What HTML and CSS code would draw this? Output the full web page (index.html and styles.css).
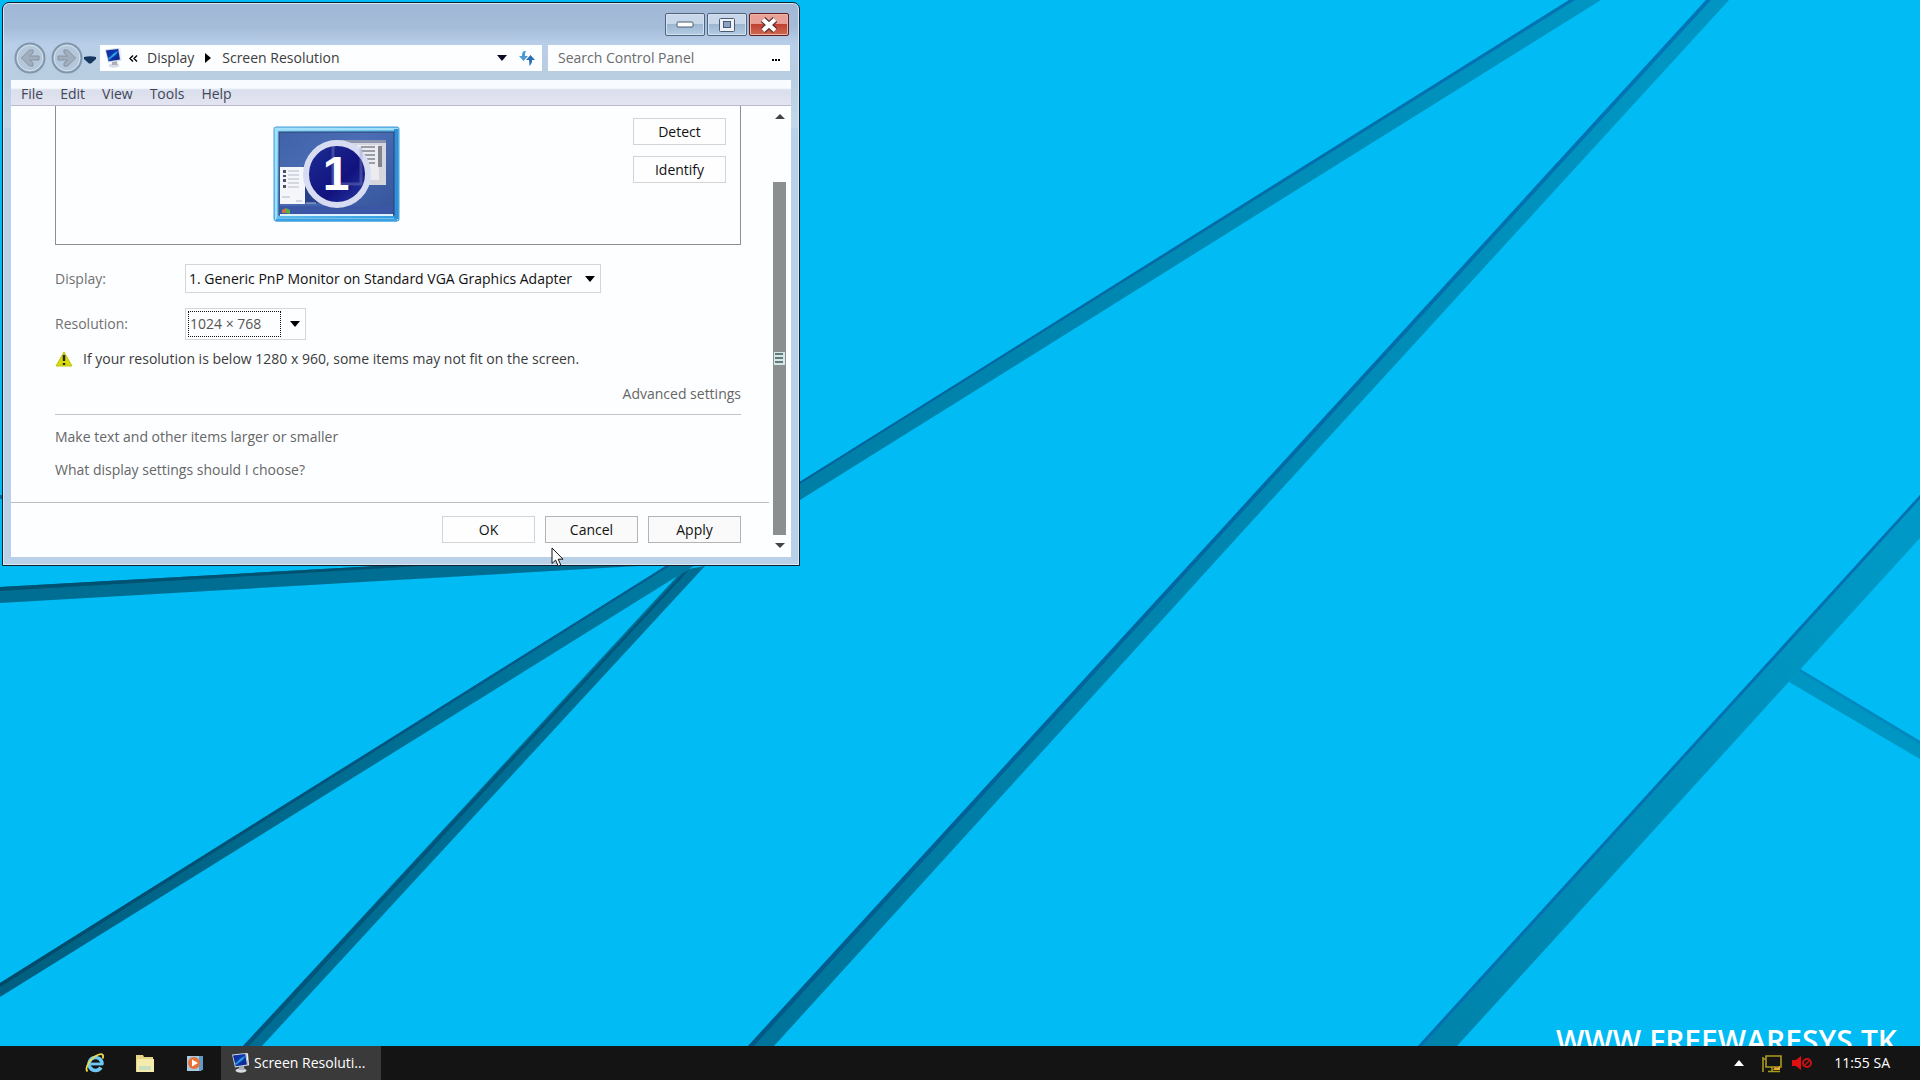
FILE: index.html
```html
<!DOCTYPE html>
<html lang="en">
<head>
<meta charset="utf-8">
<title>Screen Resolution</title>
<link rel="stylesheet" href="styles.css">
</head>
<body>
<svg class="symbols" aria-hidden="true">
  <defs>
    <linearGradient id="screen" x1="0" y1="0" x2="1" y2="1">
      <stop offset="0" stop-color="#0a2a8c"/><stop offset=".5" stop-color="#1237b8"/><stop offset="1" stop-color="#0a1d78"/>
    </linearGradient>
    <symbol id="display-icon" viewBox="0 0 18 20">
      <ellipse cx="10" cy="17.500" rx="5.500" ry="2.200" fill="#d9dce2"/>
      <path d="M8 14l5-1 .5 4H8z" fill="#aab0ba"/>
      <path d="M1 1.500L15 0l2 12.500L4 14.500z" fill="#c9d3de"/>
      <path d="M2 2.500L14.200 1l1.700 10.600L4.700 13.300z" fill="url(#screen)"/>
      <path d="M4 10c3 0 4-5 10-7-2 5-5 5-9 9z" fill="#28a6d8"/>
      <path d="M15 0l2 .6 1 11.600-1 .3z" fill="#eef2f6"/>
    </symbol>
  </defs>
</svg>

<main class="desktop">
  <svg class="wallpaper" viewBox="0 0 1920 1046" preserveAspectRatio="xMidYMid slice" aria-hidden="true">
    <defs>
      <linearGradient id="long" gradientUnits="userSpaceOnUse" x1="0" y1="990" x2="1600" y2="0">
        <stop offset="0" stop-color="#005f80"/><stop offset=".5" stop-color="#007ea6"/><stop offset="1" stop-color="#0095c2"/>
      </linearGradient>
      <linearGradient id="longEdge" gradientUnits="userSpaceOnUse" x1="0" y1="990" x2="1600" y2="0">
        <stop offset="0" stop-color="#004a69"/><stop offset=".5" stop-color="#006299"/><stop offset="1" stop-color="#0074b4"/>
      </linearGradient>
      <linearGradient id="far" gradientUnits="userSpaceOnUse" x1="1430" y1="1046" x2="1920" y2="500">
        <stop offset="0" stop-color="#0083ab"/><stop offset="1" stop-color="#009ac8"/>
      </linearGradient>
    </defs>
    <rect width="1920" height="1046" fill="#00bbf4"/>
    <path d="M0 587L377 566 638 566 0 603z" fill="#006e93"/>
    <path d="M0 587L377 566 420 566 0 591z" fill="#005272"/>
    <path d="M0 495h4v4H0z" fill="#006e93"/>
    <path d="M683 570L705 566 262 1046H243z" fill="#006e93"/>
    <path d="M683 573L689 570 249 1046H243z" fill="#00557c"/>
    <path d="M1569 0H1601L800 500 0 997V983z" fill="url(#long)"/>
    <path d="M1569 0H1575L800 484 0 987V983z" fill="url(#longEdge)"/>
    <path d="M1706 0H1729L1253 520 774 1046H748L1230 520z" fill="url(#long)"/>
    <path d="M1706 0H1711L1235 520 754 1046H748L1230 520z" fill="url(#longEdge)"/>
    <path d="M1920 495V538L1457 1046H1418z" fill="url(#far)"/>
    <path d="M1920 495V499L1422 1046H1418z" fill="#0070b0"/>
    <path d="M1800 669L1920 741V759L1789 682z" fill="#0096c4"/>
    <path d="M1800 669L1920 741V744L1799 671z" fill="#0087bd"/>
    <text class="watermark" x="1897" y="1052" text-anchor="end">WWW.FREEWARESYS.TK</text>
  </svg>

  <section class="window" aria-label="Screen Resolution">
    <header class="titlebar">
      <button class="caption" type="button" aria-label="Minimize">
        <svg width="18" height="8" viewBox="0 0 18 8"><rect x="1" y="1" width="16" height="5" rx="1" fill="#fff" stroke="#4a5a70"/></svg>
      </button>
      <button class="caption" type="button" aria-label="Maximize">
        <svg width="18" height="16" viewBox="0 0 18 16"><rect x="1.500" y="1.500" width="15" height="13" rx="1" fill="#eef2f8" stroke="#4a5a70"/><rect x="5.500" y="4.500" width="7" height="6" fill="#8aa3c2" stroke="#4a5a70"/></svg>
      </button>
      <button class="caption caption-close" type="button" aria-label="Close">
        <svg width="18" height="16" viewBox="0 0 18 16"><path d="M3 2.500l12 11M15 2.500l-12 11" stroke="#5b3030" stroke-width="6.500"/><path d="M3 2.500l12 11M15 2.500l-12 11" stroke="#fff" stroke-width="4.200"/></svg>
      </button>
    </header>

    <nav class="navbar" aria-label="Location">
      <button class="round" type="button" aria-label="Back">
        <svg width="32" height="32" viewBox="0 0 32 32"><circle cx="16" cy="16" r="14.500" fill="#b5c7da" stroke="#7f97ac" stroke-width="2"/><circle cx="16" cy="16" r="12.800" fill="none" stroke="#d5e1ec"/><path d="M7.500 16l8-8h3.500v3l-3.500 3H25v4h-9.500l3.500 3v3h-3.500z" fill="#a3aebd" stroke="#8492a4"/></svg>
      </button>
      <button class="round" type="button" aria-label="Forward">
        <svg width="32" height="32" viewBox="0 0 32 32"><circle cx="16" cy="16" r="14.500" fill="#b5c7da" stroke="#7f97ac" stroke-width="2"/><circle cx="16" cy="16" r="12.800" fill="none" stroke="#d5e1ec"/><path d="M24.500 16l-8-8H13v3l3.500 3H7v4h9.500L13 21v3h3.500z" fill="#a3aebd" stroke="#8492a4"/></svg>
      </button>
      <button class="recent" type="button" aria-label="Recent pages">
        <svg width="12" height="8" viewBox="0 0 12 8"><path d="M0 1q6-1.500 12 0v2L7 7.500H5L0 3z" fill="#17365e"/></svg>
      </button>
      <div class="address">
        <svg class="address-icon" width="18" height="20"><use href="#display-icon"/></svg>
        <svg class="chevrons" width="9" height="7" viewBox="0 0 9 7"><path d="M4 .5L1 3.500l3 3M8 .5L5 3.500l3 3" fill="none" stroke="#000" stroke-width="1.400"/></svg>
        <a href="#display">Display</a>
        <svg class="crumb-arrow" width="6" height="10" viewBox="0 0 6 10"><path d="M0 0l6 5-6 5z"/></svg>
        <a href="#resolution">Screen Resolution</a>
        <button class="history" type="button" aria-label="Previous locations">
          <svg width="10" height="6" viewBox="0 0 10 6"><path d="M0 0h10L5 6z" fill="#0b0b2a"/></svg>
        </button>
        <button class="refresh" type="button" aria-label="Refresh">
          <svg width="16" height="16" viewBox="0 0 16 16"><path d="M5 1C3 2 3 4 3 6H0l4.500 5L9 6H6c0-2 0-3 1-5z" fill="#4b9ad6"/><path d="M11.500 5L16 10h-3c0 2 0 4-3 6 1-2 0-4 0-6H7z" fill="#2a6fb5"/></svg>
        </button>
      </div>
      <div class="search">
        <input type="search" aria-label="Search Control Panel" placeholder="Search Control Panel">
        <button class="search-options" type="button" aria-label="Search options"><svg width="8" height="2" viewBox="0 0 8 2"><path d="M0 0h2v2H0zM3 0h2v2H3zM6 0h2v2H6z"/></svg></button>
      </div>
    </nav>

    <div class="client">
      <div class="menubar">
        <button type="button">File</button>
        <button type="button">Edit</button>
        <button type="button">View</button>
        <button type="button">Tools</button>
        <button type="button">Help</button>
      </div>

      <div class="view">
        <form class="page">
          <div class="settings">
            <div class="preview">
              <svg class="monitor" width="127" height="96" viewBox="0 0 127 96" role="img" aria-label="Monitor 1">
                <defs>
                  <linearGradient id="bezel" x1="0" y1="0" x2="1" y2="1"><stop offset="0" stop-color="#8fdcfb"/><stop offset="1" stop-color="#2e9ade"/></linearGradient>
                  <linearGradient id="wall" x1="0" y1="0" x2="1" y2="1"><stop offset="0" stop-color="#3f62a8"/><stop offset=".4" stop-color="#4a6db4"/><stop offset="1" stop-color="#34539a"/></linearGradient>
                  <linearGradient id="disc" x1="0" y1="0" x2="1" y2="1"><stop offset="0" stop-color="#1d2f96"/><stop offset=".6" stop-color="#12127e"/><stop offset="1" stop-color="#2a3fa8"/></linearGradient>
                </defs>
                <rect x="1" y="1" width="125" height="94" rx="2" fill="url(#bezel)" stroke="#4a9fd6" stroke-width="1"/>
                <rect x="3" y="3" width="121" height="90" fill="none" stroke="#a5e0fb" stroke-width="2"/>
                <path d="M123 3v90" stroke="#2f8fd8" stroke-width="4"/>
                <path d="M3 94h121" stroke="#3aa0e2" stroke-width="3"/>
                <rect x="6" y="6" width="115" height="83" fill="url(#wall)" stroke="#2c4272"/>
                <rect x="7" y="80" width="113" height="8" fill="#3a56a4"/>
                <rect x="59" y="14" width="54" height="45" fill="#d5d7dd"/>
                <rect x="59" y="14" width="54" height="3" fill="#8c96b0"/>
                <rect x="84" y="19" width="22" height="35" fill="#ececf0"/>
                <path d="M88 21h14M88 25h14M88 29h14M88 33h14M88 37h14" stroke="#9a9ea8" stroke-width="2"/>
                <rect x="105" y="20" width="4" height="21" fill="#80858f"/>
                <path d="M30 40h16v37H30z" fill="#27408c"/>
                <rect x="7" y="41" width="25" height="37" fill="#f5f6fa"/>
                <path d="M15 45h11M15 49h11M15 53h11M15 57h11M15 61h11" stroke="#b4bac8"/>
                <path d="M10 44h3v3h-3zM10 49h3v2h-3zM10 53h3v3h-3zM10 59h3v3h-3z" fill="#48506a"/>
                <path d="M9 71h8M23 75h6M33 77h10" stroke="#a9b6d2"/>
                <path d="M9 84l4-2v5H9z" fill="#c8783c"/><path d="M13 82l4 2v4l-4-1z" fill="#58b04c"/>
                <path d="M7 89h113" stroke="#dcf3ff" stroke-width="2"/>
                <circle cx="64" cy="48" r="31" fill="url(#disc)" stroke="#d7dcf2" stroke-width="6"/>
                <path d="M60 20v38h28v-37" fill="none" stroke="#8f95cc" stroke-width="3" opacity=".35"/>
                <text class="monitor-number" x="63" y="64" text-anchor="middle">1</text>
              </svg>
              <div class="preview-actions">
                <button class="push" type="button">Detect</button>
                <button class="push" type="button">Identify</button>
              </div>
            </div>

            <div class="field">
              <label for="display">Display:</label>
              <span class="combo combo-display">
                <select id="display"><option>1. Generic PnP Monitor on Standard VGA Graphics Adapter</option></select>
                <svg width="10" height="6" viewBox="0 0 10 6"><path d="M0 0h10L5 6z"/></svg>
              </span>
            </div>
            <div class="field">
              <label for="resolution">Resolution:</label>
              <span class="combo combo-resolution">
                <select id="resolution"><option>1024 × 768</option></select>
                <svg width="10" height="6" viewBox="0 0 10 6"><path d="M0 0h10L5 6z"/></svg>
              </span>
            </div>

            <p class="warning">
              <svg width="18" height="16" viewBox="0 0 18 16"><path d="M9 1l8 14H1z" fill="#d8d80c" stroke="#c2c21a"/><path d="M9 4v6M9 12v2" stroke="#26260a" stroke-width="2.400"/></svg>
              If your resolution is below 1280 x 960, some items may not fit on the screen.
            </p>
            <p class="advanced"><a href="#advanced">Advanced settings</a></p>
            <div class="help-links">
              <a href="#text-size">Make text and other items larger or smaller</a>
              <a href="#help">What display settings should I choose?</a>
            </div>
          </div>
          <div class="actions">
            <button class="push" type="button">OK</button>
            <button class="push push-strong" type="button">Cancel</button>
            <button class="push push-strong" type="button">Apply</button>
          </div>
        </form>

        <div class="scrollbar" aria-hidden="true">
          <svg width="10" height="6" viewBox="0 0 10 6"><path d="M5 0l5 5H0z" fill="#444"/></svg>
          <div class="track">
            <div class="thumb">
              <svg width="11" height="13" viewBox="0 0 11 13"><path d="M0 0h11v13H0z" fill="#d5e6e6"/><path d="M1 2h8M1 6h8M1 10h8" stroke="#3f5558" stroke-width="1.500"/></svg>
            </div>
          </div>
          <svg width="10" height="6" viewBox="0 0 10 6"><path d="M0 0h10L5 5z" fill="#444"/></svg>
        </div>
      </div>
    </div>
  </section>

  <svg class="pointer" width="14" height="21" viewBox="0 0 14 21" aria-hidden="true"><path d="M1 1v15.500l3.600-3.400 2.600 6 2.600-1.100-2.600-5.800H12z" fill="#fff" stroke="#111"/></svg>
</main>

<footer class="taskbar">
  <button class="launcher" type="button" aria-label="Internet Explorer">
    <svg width="20" height="20" viewBox="0 0 20 20"><path d="M17 11.500a6.500 6.500 0 1 0-1 3" fill="none" stroke="#6fc8f2" stroke-width="3.500"/><path d="M5 11h13" stroke="#6fc8f2" stroke-width="2.800"/><path d="M2.500 18.500C-1 15 6 4 14 1.500c4-1 5 1 3.500 4" fill="none" stroke="#f1d94a" stroke-width="1.800"/></svg>
  </button>
  <button class="launcher" type="button" aria-label="File Explorer">
    <svg width="20" height="20" viewBox="0 0 20 20"><path d="M1 2h7l1 2h9v15H1z" fill="#e6d583"/><path d="M2 6h17v13H2z" fill="#f5ebac"/><path d="M4 13h12v4H4z" fill="#c9dfbd"/></svg>
  </button>
  <button class="launcher" type="button" aria-label="Media Player">
    <svg width="20" height="20" viewBox="0 0 20 20"><path d="M2 3h14v15H2z" fill="#a8cbe4"/><path d="M14 3h4v14l-4 1z" fill="#5f9bc6"/><circle cx="9" cy="10" r="6" fill="#e8713a"/><path d="M7 6.500l6 3.500-6 3.500z" fill="#fff"/></svg>
  </button>
  <button class="task" type="button">
    <svg width="18" height="20"><use href="#display-icon"/></svg>
    Screen Resoluti...
  </button>
  <div class="tray">
    <svg width="10" height="6" viewBox="0 0 10 6"><path d="M5 0l5 6H0z" fill="#fff"/></svg>
    <svg class="network" width="20" height="19" viewBox="0 0 20 19"><path d="M4 2h15v11H4zM1 3v15M1 5h3M6 17.500h12M10 13v4" fill="none" stroke="#a99a1c" stroke-width="1.600"/><path d="M11 16l2-3 2 1 3-2v4z" fill="#f0a92c"/></svg>
    <svg class="volume" width="20" height="14" viewBox="0 0 20 14"><path d="M0 4h4l5-4v14l-5-4H0z" fill="#e01010"/><circle cx="15" cy="7" r="4" fill="none" stroke="#c81212" stroke-width="2"/><path d="M12 10l6-6" stroke="#c81212" stroke-width="1.500"/></svg>
    <time datetime="11:55">11:55 SA</time>
  </div>
</footer>
</body>
</html>
```
FILE: styles.css
```css
* { box-sizing: border-box; }

html, body { height: 100%; }

body {
  display: flex;
  flex-direction: column;
  margin: 0;
  overflow: hidden;
  background: #00bbf4;
  color: #3c3c3c;
  font: 14px/20px "Open Sans", "Noto Sans", sans-serif;
}

button, input, select {
  margin: 0;
  padding: 0;
  border: 0;
  background: none;
  color: inherit;
  font: inherit;
}

a { color: inherit; text-decoration: none; }
p { margin: 0; }
svg { display: block; flex: none; }

.symbols { position: absolute; width: 0; height: 0; }

/* Desktop */
.desktop {
  position: relative;
  flex: 1;
  min-height: 0;
  overflow: hidden;
}

.wallpaper { width: 100%; height: 100%; }

.watermark {
  fill: #fff;
  font-size: 30px;
  font-weight: 600;
}

.pointer { position: absolute; left: 551px; top: 547px; }

/* Window frame */
.window {
  position: absolute;
  left: 2px;
  top: 2px;
  width: 798px;
  padding: 0 8px 8px;
  border: 1px solid #10202e;
  border-radius: 7px 7px 0 0;
  background: linear-gradient(#a0b7d5, #a5bcd9 24px, #b9cfe9 42px, #b9cde0 72px, #c3d6ea 124px, #b9d1e8 126px);
  box-shadow: inset 0 0 0 1px #d8e8f5;
}

.titlebar {
  display: flex;
  justify-content: flex-end;
  gap: 2px;
  height: 42px;
  padding: 10px 2px 0 0;
}

.caption {
  display: flex;
  align-items: center;
  justify-content: center;
  width: 40px;
  height: 23px;
  border: 1px solid #50647e;
  border-radius: 2px;
  background: linear-gradient(#c8d8ea 0 45%, #9db6d2 50%, #b4cce4);
  box-shadow: inset 0 0 0 1px #d5e3f1;
}

.caption-close {
  border-color: #5c1f22;
  background: linear-gradient(#e8a097 0 45%, #c04132 50%, #cf6a50);
  box-shadow: inset 0 0 0 1px #efb3a8;
}

/* Navigation row */
.navbar {
  display: flex;
  align-items: center;
  height: 26px;
  padding: 0 1px 0 3px;
}

.round { margin: -3px 5px -3px 0; }
.recent { margin: 3px 4px 0 -4px; }

.address, .search {
  display: flex;
  align-items: center;
  height: 26px;
  background: #fdfeff;
}

.address { flex: 1; padding: 0 7px 0 4px; }
.address-icon { margin-right: 7px; }
.chevrons { margin-right: 9px; }
.crumb-arrow { margin: 0 11px; }
.history { margin: 0 12px 0 auto; }

.search { width: 242px; margin-left: 6px; padding: 0 10px; }
.search input { flex: 1; min-width: 0; outline: 0; appearance: none; }
.search input::placeholder { color: #6b6b6b; opacity: 1; }
.search-options { padding-top: 4px; }

/* Client area */
.client { margin-top: 9px; background: #fdfeff; }

.menubar {
  display: flex;
  gap: 17px;
  height: 26px;
  padding: 4px 10px 0;
  border-bottom: 1px solid #b8bcc8;
  background: linear-gradient(#f8fbff 0 8px, #d9dfec 10px, #e4e4f2);
}

.menubar button { height: 20px; color: #3f4658; }

.view { display: flex; }
.page { flex: 1; min-width: 0; }
.settings { padding: 0 28px 0 44px; }

.preview {
  display: flex;
  justify-content: flex-end;
  height: 139px;
  margin-bottom: 19px;
  padding-right: 14px;
  border: 1px solid #8f8f92;
  border-top: 0;
}

.monitor { margin: 20px 233px 0 0; }
.monitor-number { fill: #fff; font: bold 48px "Liberation Sans", sans-serif; }

.preview-actions {
  display: flex;
  flex-direction: column;
  gap: 11px;
  padding-top: 12px;
}

.push {
  width: 93px;
  height: 27px;
  border: 1px solid #d4d4d4;
  background: #fefefe;
  color: #111;
}

.push-strong { border-color: #b4b4b4; background: #fafafa; }

.field { display: flex; align-items: center; margin-bottom: 15px; }
.field label { width: 130px; color: #707070; }

.combo {
  display: flex;
  align-items: center;
  padding: 2px 5px 2px 2px;
  border: 1px solid #d6d6d6;
}

.combo select { flex: 1; min-width: 0; appearance: none; }
.combo-display { width: 416px; height: 29px; color: #111; }
.combo-display select { padding-left: 1px; }
.combo-resolution { width: 121px; height: 32px; }
.combo-resolution select { height: 26px; margin-right: 9px; padding-left: 1px; border: 1px dotted #111; color: #555; }
.combo svg { color: #000; }

.warning {
  display: flex;
  align-items: center;
  gap: 10px;
  margin: -6px 0 15px;
}

.advanced { padding-bottom: 10px; border-bottom: 1px solid #c3c3c3; text-align: right; }
.advanced a, .help-links { color: #666; }

.help-links {
  display: flex;
  flex-direction: column;
  align-items: flex-start;
  gap: 13px;
  padding: 12px 0 22px;
}

.actions {
  display: flex;
  justify-content: flex-end;
  gap: 10px;
  padding: 13px 28px 14px 0;
  border-top: 1px solid #bcbcbc;
}

.scrollbar {
  display: flex;
  flex-direction: column;
  align-items: center;
  width: 22px;
  padding: 8px 5px 8px 4px;
}

.track {
  display: flex;
  flex: 1;
  align-items: flex-end;
  padding: 8px 0;
}

.thumb {
  display: flex;
  align-items: center;
  justify-content: center;
  width: 13px;
  height: 353px;
  background: #8c8f8f;
}

/* Taskbar */
.taskbar {
  display: flex;
  flex: none;
  height: 34px;
  padding-left: 70px;
  background: #141414;
  color: #fff;
}

.launcher {
  display: flex;
  align-items: center;
  justify-content: center;
  width: 50px;
}

.task {
  display: flex;
  align-items: center;
  gap: 5px;
  width: 160px;
  margin-left: 1px;
  padding: 0 10px;
  background: #3a3a3a;
  white-space: nowrap;
}

.tray {
  display: flex;
  align-items: center;
  margin-left: auto;
  padding-right: 30px;
}

.network { margin: 0 10px 0 18px; }
.volume { margin-right: 22px; }
```
